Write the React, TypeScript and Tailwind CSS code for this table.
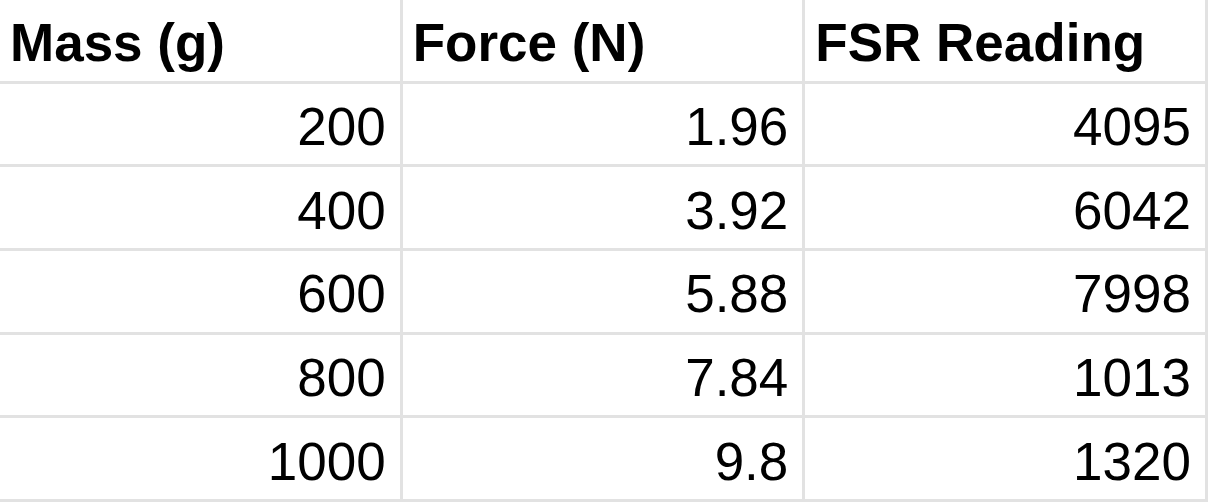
const headers = ["Mass (g)", "Force (N)", "FSR Reading"];

const rows = [
  ["200", "1.96", "4095"],
  ["400", "3.92", "6042"],
  ["600", "5.88", "7998"],
  ["800", "7.84", "1013"],
  ["1000", "9.8", "1320"],
];

export default function App() {
  return (
    <div
      className="grid h-[502px] w-[1208px] grid-cols-3 grid-rows-6 bg-white text-black"
      style={{ fontFamily: '"Liberation Sans", Arial, sans-serif' }}
    >
      {headers.map((h) => (
        <div
          key={h}
          className="flex items-end border-r-[3px] border-b-[3px] border-[#e2e2e2] pb-[8px] pl-[10px] text-[53px] leading-[1.117] font-bold"
        >
          {h}
        </div>
      ))}
      {rows.map((r, i) =>
        r.map((v, j) => (
          <div
            key={`${i}-${j}`}
            className="flex items-end justify-end border-r-[3px] border-b-[3px] border-[#e2e2e2] pr-[14px] pb-[8px] text-[53px] leading-[1.117]"
          >
            {v}
          </div>
        ))
      )}
    </div>
  );
}
